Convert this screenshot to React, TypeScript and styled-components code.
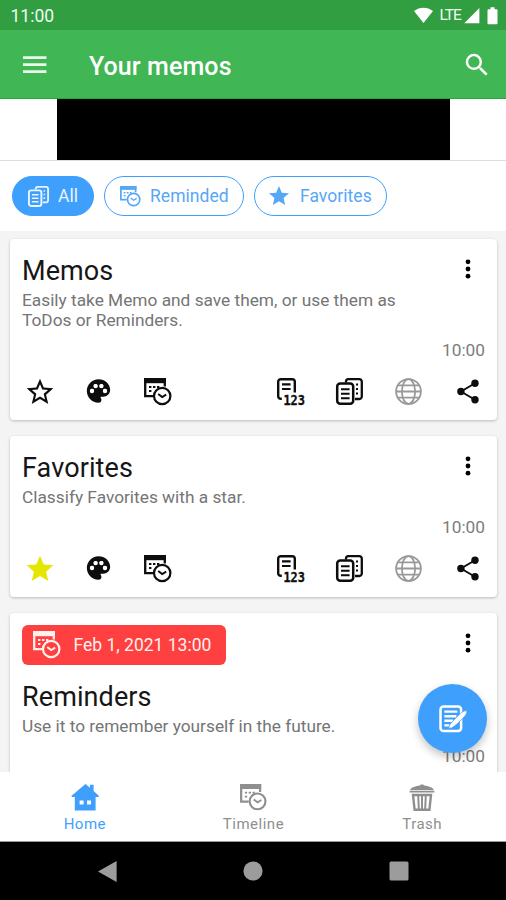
import React from "react";
import styled, { createGlobalStyle } from "styled-components";
import { MdPalette, MdStar, MdStarBorder, MdSearch } from "react-icons/md";

const GlobalStyle = createGlobalStyle`
  * { box-sizing: border-box; }
  body { margin: 0; background: #000; font-family: Roboto, "Liberation Sans", sans-serif; }
  svg { display: block; overflow: visible; flex: none; }
  button { border: 0; padding: 0; background: none; font: inherit; color: inherit; }
`;

const blue = "#3f9ffc";

const Screen = styled.div`
  width: 506px;
  height: 900px;
  display: flex;
  flex-direction: column;
  overflow: hidden;
  background: #fff;
`;

const StatusBar = styled.div`
  height: 30px;
  flex: none;
  display: flex;
  align-items: center;
  justify-content: space-between;
  padding: 2px 8px 0 10.5px;
  background: #309e41;
  color: #f1fbf2;
`;

const Clock = styled.span`
  font-size: 17.5px;
`;

const StatusIcons = styled.div`
  display: flex;
  align-items: center;
  height: 18px;
`;

const Network = styled.span`
  font-size: 15.5px;
  letter-spacing: -0.9px;
  margin: -2px 3px 0 6px;
`;

const AppBar = styled.header`
  height: 69px;
  flex: none;
  display: flex;
  align-items: center;
  padding: 1px 14px 0 23px;
  background: #41b655;
  color: #fff;
  border-bottom: 1px solid #25a83b;
`;

const AppTitle = styled.h1`
  flex: 1;
  margin: 4px 0 0 42px;
  font-size: 25px;
  line-height: 28px;
  font-weight: 500;
  letter-spacing: 0.1px;
`;

const AdStrip = styled.div`
  height: 62px;
  flex: none;
  display: flex;
  justify-content: center;
  border-bottom: 1px solid #dedede;
`;

const AdBanner = styled.div`
  width: 393px;
  height: 61px;
  background: #000;
`;

const ChipRow = styled.div`
  height: 70px;
  flex: none;
  display: flex;
  align-items: center;
  gap: 10px;
  padding: 0 12px;
  background: #fff;
`;

const Chip = styled.button<{ $active?: boolean; $width: number; $inset?: number }>`
  width: ${(p) => p.$width}px;
  height: 40px;
  display: flex;
  align-items: center;
  gap: 9px;
  padding-left: ${(p) => p.$inset ?? 15}px;
  border: 1.4px solid ${blue};
  border-radius: 20px;
  background: ${(p) => (p.$active ? blue : "#fff")};
  color: ${(p) => (p.$active ? "#eaf5ff" : "#57a7f7")};
  font-size: 17.5px;
  letter-spacing: 0.05px;
`;

const List = styled.main`
  flex: 1;
  min-height: 0;
  overflow: hidden;
  display: flex;
  flex-direction: column;
  gap: 16px;
  padding: 8px 9px 0 10px;
  background: #f4f4f4;
`;

const Card = styled.article<{ $height: number }>`
  height: ${(p) => p.$height}px;
  flex: none;
  display: flex;
  flex-direction: column;
  background: #fff;
  border-radius: 4px;
  box-shadow: 0 1px 3px rgba(0, 0, 0, 0.24);
`;

const CardTop = styled.div`
  display: flex;
  justify-content: space-between;
  padding: 12px 26px 0 12px;
`;

const CardText = styled.div`
  display: flex;
  flex-direction: column;
  align-items: flex-start;
`;

const CardTitle = styled.h2`
  margin: 4px 0 0;
  font-size: 27px;
  line-height: 32px;
  font-weight: 400;
  color: #161616;
  letter-spacing: 0.1px;
`;

const Description = styled.p`
  margin: 3px 0 0;
  width: 400px;
  font-size: 17.3px;
  line-height: 20px;
  color: #757575;
`;

const MoreButton = styled.button`
  height: 28px;
  display: flex;
  align-items: center;
  margin-top: 4px;
`;

const Time = styled.time`
  align-self: flex-end;
  margin: 10px 12px 0 0;
  font-size: 17.3px;
  line-height: 20px;
  color: #7d7d7d;
`;

const Actions = styled.div`
  display: flex;
  justify-content: space-between;
  margin-top: 18px;
`;

const ActionGroup = styled.div`
  display: flex;
`;

const Action = styled.button<{ $color?: string }>`
  width: 59px;
  height: 27px;
  display: flex;
  align-items: center;
  justify-content: center;
  color: ${(p) => p.$color ?? "#0d0d0d"};
`;

const ReminderBadge = styled.div`
  width: 204px;
  height: 40px;
  display: flex;
  align-items: center;
  gap: 12.5px;
  padding-left: 11px;
  margin-bottom: 12px;
  border-radius: 6px;
  background: #ff4040;
  color: #fff0ee;
  font-size: 17.5px;
`;

const Fab = styled.button`
  position: fixed;
  left: 418px;
  top: 684px;
  width: 69px;
  height: 69px;
  display: flex;
  align-items: center;
  justify-content: center;
  border-radius: 50%;
  background: ${blue};
  color: #fff;
  box-shadow: 0 4px 8px rgba(0, 0, 0, 0.24);
`;

const TabBar = styled.nav`
  height: 70px;
  flex: none;
  display: grid;
  grid-template-columns: repeat(3, 1fr);
  background: #fff;
  border-bottom: 1px solid #9a9a9a;
`;

const Tab = styled.button<{ $active?: boolean }>`
  display: flex;
  flex-direction: column;
  align-items: center;
  padding-top: 12px;
  padding-left: 1px;
  color: ${(p) => (p.$active ? blue : "#8f8f8f")};
`;

const TabLabel = styled.span`
  margin-top: 4px;
  font-size: 15px;
  line-height: 18px;
  letter-spacing: 0.5px;
`;

const SystemBar = styled.div`
  height: 58px;
  flex: none;
  display: flex;
  align-items: center;
  justify-content: center;
  gap: 126px;
  background: #000;
  color: #9c9c9c;
`;

const ReminderIcon = ({ size = 28 }: { size?: number }) => (
  <svg width={size} height={size} viewBox="0 0 28 28" fill="none" stroke="currentColor">
    <path d="M9 18.2H1.2V1.2h19.6V8.4" strokeWidth="2.3" />
    <path d="M0 0h22v5.2H0z" fill="currentColor" stroke="none" />
    <path d="M5 9h2.4M9 9h2.4M13 9h2.4M5 13h2.4" strokeWidth="1.8" />
    <circle cx="18.2" cy="18" r="8.2" strokeWidth="2.2" />
    <path d="M14.2 16l4 3 4-2.4" strokeWidth="1.9" />
  </svg>
);

const CopyIcon = ({ size = 27 }: { size?: number }) => (
  <svg width={size} height={size} viewBox="0 0 27 27" fill="none" stroke="currentColor">
    <path d="M10 4.4V3.6a2.4 2.4 0 0 1 2.4-2.4h11a2.4 2.4 0 0 1 2.4 2.4v15a2.4 2.4 0 0 1-2.4 2.4H19" strokeWidth="2.3" />
    <rect x="1.2" y="5.6" width="16" height="20.2" rx="3" strokeWidth="2.5" />
    <path d="M5 11.2h8.6M5 15.7h8.6M5 20.2h8.6" strokeWidth="2.1" />
    <path d="M20 6.4h2M20 11h2M20 15.6h2" strokeWidth="2" />
  </svg>
);

const NumberedIcon = () => (
  <svg width="27" height="27" viewBox="0 0 27 27" fill="none" stroke="currentColor">
    <path d="M4.8 20.8H3.8a2.6 2.6 0 0 1-2.6-2.6V3.8a2.6 2.6 0 0 1 2.6-2.6h11.4a2.6 2.6 0 0 1 2.6 2.6v10.6" strokeWidth="2.4" />
    <path d="M5 6.4h8.6M5 11h8.6" strokeWidth="2.1" />
    <text
      x="6.4"
      y="26.6"
      fill="currentColor"
      strokeWidth="0.3"
      fontFamily="'DejaVu Sans Mono', monospace"
      fontWeight="700"
      fontSize="13.2"
      textLength="21.6"
      lengthAdjust="spacingAndGlyphs"
    >
      123
    </text>
  </svg>
);

const GlobeIcon = () => (
  <svg width="27" height="27" viewBox="0 0 27 27" fill="none" stroke="currentColor" strokeWidth="1.8">
    <circle cx="13.5" cy="13.5" r="12.4" />
    <ellipse cx="13.5" cy="13.5" rx="6.6" ry="12.4" />
    <path d="M1 13.5h25M3 7.4h21M3 19.6h21" />
  </svg>
);

const ShareIcon = () => (
  <svg width="22" height="25" viewBox="0 0 22 25" fill="currentColor" stroke="currentColor">
    <path d="M18 4.2L4 12.5 18 20.8" fill="none" strokeWidth="1.9" />
    <circle cx="3.9" cy="12.5" r="3.7" stroke="none" />
    <circle cx="18" cy="4.2" r="3.7" stroke="none" />
    <circle cx="18" cy="20.8" r="3.7" stroke="none" />
  </svg>
);

const PaletteIcon = () => (
  <svg width="27" height="27" viewBox="0 0 27 27">
    <MdPalette x="-0.5" y="-1" size={28} />
    <g fill="#fff">
      <circle cx="7" cy="13" r="2.2" />
      <circle cx="10.6" cy="8.1" r="2.2" />
      <circle cx="16.4" cy="8.1" r="2.2" />
      <circle cx="20" cy="13" r="2.2" />
    </g>
  </svg>
);

const MoreIcon = () => (
  <svg width="6" height="20" viewBox="0 0 6 20" fill="currentColor">
    <circle cx="3" cy="2.8" r="2.4" />
    <circle cx="3" cy="10" r="2.4" />
    <circle cx="3" cy="17.2" r="2.4" />
  </svg>
);

const ComposeIcon = () => (
  <svg width="28" height="28" viewBox="0 0 28 28" fill="none" stroke="currentColor">
    <rect x="1.5" y="1.4" width="20.6" height="24.6" rx="3" strokeWidth="2.5" />
    <path d="M5.4 6.6h13M5.4 11.2h12M5.4 15.8h8.6M5.4 20.4h5" strokeWidth="2.4" />
    <path d="M27.9 6c.4 2.6-2.2 5.4-4.6 7.8-3.2 3.4-7 6.8-10.4 9l-3.2.6.8-3.2c2.4-3.4 6.2-7.2 9.4-10.2 2.6-2.4 5.2-4.8 8-4z" fill="currentColor" stroke={blue} strokeWidth="0.7" />
  </svg>
);

const HomeIcon = () => (
  <svg width="28" height="27" viewBox="0 0 28 27" fill="currentColor" fillRule="evenodd">
    <path d="M14.5 0l4.5 3.8V.8h3.6v6.1l5.2 4.9c.4.6 0 1.2-.8 1.2h-2.4v13.6H3.8V13H1.4c-.8 0-1.2-.6-.8-1.2zM8.6 16.4v4h4v-4zm7.4 0v4h4v-4z" />
  </svg>
);

const TrashIcon = () => (
  <svg width="26" height="27" viewBox="0 0 26 27" fill="none" stroke="currentColor">
    <path d="M1 6C2 3.4 7 1.8 10.8 1.4 11 .2 15 .2 15.2 1.4 19 1.8 24 3.4 25 6z" fill="currentColor" stroke="none" />
    <path d="M.6 7.6h24.8" strokeWidth="1.8" />
    <path d="M4 11h18L20.4 25.8H5.6z" strokeWidth="2.4" />
    <path d="M9.2 11l.6 14M13 11v14M16.8 11l-.6 14" strokeWidth="2" />
  </svg>
);

interface Memo {
  title: string;
  text: string;
  height: number;
  starred?: boolean;
  reminder?: string;
  hideActions?: boolean;
}

const memos: Memo[] = [
  { title: "Memos", text: "Easily take Memo and save them, or use them as ToDos or Reminders.", height: 181 },
  { title: "Favorites", text: "Classify Favorites with a star.", height: 161, starred: true },
  { title: "Reminders", text: "Use it to remember yourself in the future.", height: 213, reminder: "Feb 1, 2021 13:00", hideActions: true },
];

const MemoActions = ({ starred }: { starred?: boolean }) => (
  <Actions>
    <ActionGroup>
      <Action $color={starred ? "#e4e800" : undefined} aria-label="Favorite">
        {starred ? <MdStar size={32} /> : <MdStarBorder size={32} />}
      </Action>
      <Action aria-label="Colour"><PaletteIcon /></Action>
      <Action aria-label="Remind"><ReminderIcon /></Action>
    </ActionGroup>
    <ActionGroup>
      <Action aria-label="Number"><NumberedIcon /></Action>
      <Action aria-label="Copy"><CopyIcon /></Action>
      <Action $color="#999" aria-label="Web"><GlobeIcon /></Action>
      <Action aria-label="Share"><ShareIcon /></Action>
    </ActionGroup>
  </Actions>
);

const MemoCard = ({ memo }: { memo: Memo }) => (
  <Card $height={memo.height}>
    <CardTop>
      <CardText>
        {memo.reminder && (
          <ReminderBadge>
            <ReminderIcon />
            {memo.reminder}
          </ReminderBadge>
        )}
        <CardTitle>{memo.title}</CardTitle>
        <Description>{memo.text}</Description>
      </CardText>
      <MoreButton aria-label="More">
        <MoreIcon />
      </MoreButton>
    </CardTop>
    <Time>10:00</Time>
    {!memo.hideActions && <MemoActions starred={memo.starred} />}
  </Card>
);

export default function App() {
  return (
    <>
      <GlobalStyle />
      <Screen>
        <StatusBar>
          <Clock>11:00</Clock>
          <StatusIcons>
            <svg width="19" height="16" viewBox="0 0 19 16" fill="#fff">
              <path d="M0 3.1C5.4-1.4 13.6-1.4 19 3.1L9.5 15.1z" />
            </svg>
            <Network>LTE</Network>
            <svg width="16" height="16" viewBox="0 0 16 16" fill="#fff">
              <path d="M15.4 0v15.2H.2z" />
            </svg>
            <svg width="18" height="17" viewBox="0 0 18 17" fill="#fff">
              <path d="M10.5-.7h4v2h2q1 0 1 1v13q0 1-1 1h-8q-1 0-1-1v-13q0-1 1-1h2z" />
            </svg>
          </StatusIcons>
        </StatusBar>
        <AppBar>
          <svg width="24" height="18" viewBox="0 0 24 18" stroke="#e9f9e9" strokeWidth="2.8">
            <path d="M0 1.6h23.4M0 8.6h23.4M0 15.6h23.4" />
          </svg>
          <AppTitle>Your memos</AppTitle>
          <MdSearch size={30} />
        </AppBar>
        <AdStrip>
          <AdBanner />
        </AdStrip>
        <ChipRow>
          <Chip $active $width={82}>
            <CopyIcon size={21} />
            All
          </Chip>
          <Chip $width={140}>
            <ReminderIcon size={21} />
            Reminded
          </Chip>
          <Chip $width={133} $inset={12}>
            <MdStar size={24} />
            Favorites
          </Chip>
        </ChipRow>
        <List>
          {memos.map((m) => (
            <MemoCard key={m.title} memo={m} />
          ))}
        </List>
        <TabBar>
          <Tab $active>
            <HomeIcon />
            <TabLabel>Home</TabLabel>
          </Tab>
          <Tab>
            <ReminderIcon size={27} />
            <TabLabel>Timeline</TabLabel>
          </Tab>
          <Tab>
            <TrashIcon />
            <TabLabel>Trash</TabLabel>
          </Tab>
        </TabBar>
        <SystemBar>
          <svg width="19" height="21" viewBox="0 0 19 21" fill="currentColor"><path d="M18.6 0v21L0 10.5z" /></svg>
          <svg width="20" height="20" viewBox="0 0 20 20" fill="currentColor"><circle cx="10" cy="10" r="9.6" /></svg>
          <svg width="20" height="20" viewBox="0 0 20 20" fill="currentColor"><rect x=".5" y=".5" width="19" height="19" rx="1.5" /></svg>
        </SystemBar>
      </Screen>
      <Fab aria-label="New memo">
        <ComposeIcon />
      </Fab>
    </>
  );
}
